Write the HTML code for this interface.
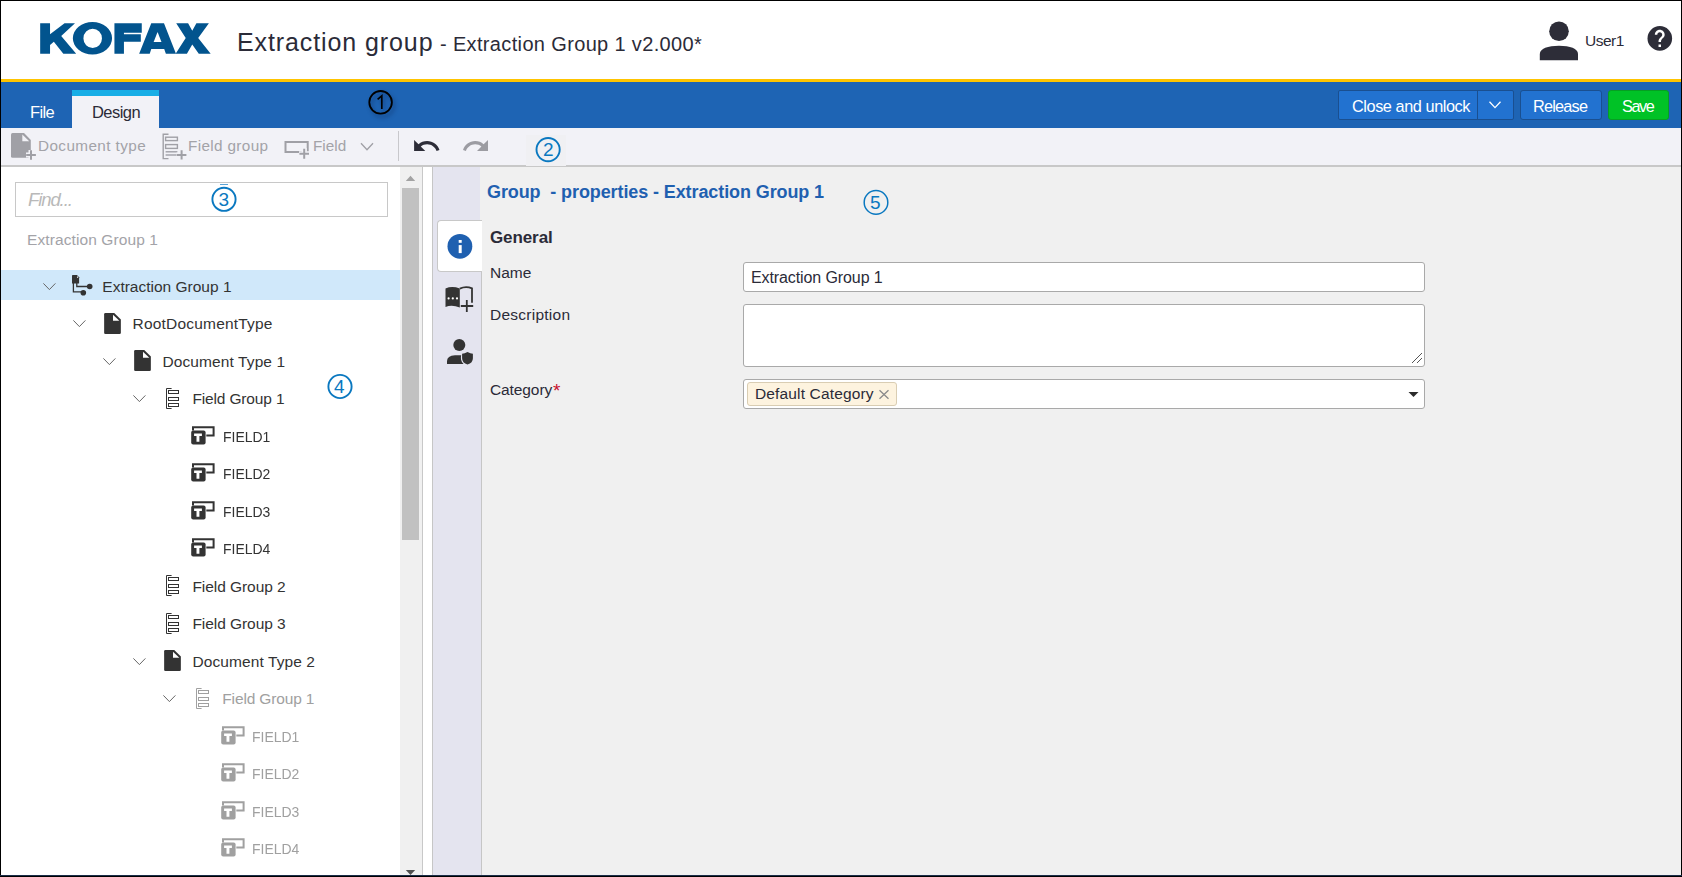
<!DOCTYPE html>
<html><head><meta charset="utf-8">
<style>
*{box-sizing:border-box}
html,body{margin:0;padding:0}
body{width:1682px;height:877px;overflow:hidden;position:relative;background:#fff;font-family:"Liberation Sans",sans-serif;color:#333}
.a{position:absolute}
.t{position:absolute;white-space:pre;line-height:1}
svg{position:absolute;overflow:visible}
</style></head><body>
<!-- header -->
<div class="a" style="left:0;top:0;width:1682px;height:79px;background:#fff"></div>
<svg style="left:30px;top:10px" width="200" height="60" viewBox="0 0 1682 505">
 <g fill="#02548e">
  <polygon points="85,112 168,112 168,205 290,112 378,112 262,218 388,368 280,368 200,268 168,295 168,368 85,368"/>
  <path fill-rule="evenodd" d="M360,238 A165,137 0 1,0 690,238 A165,137 0 1,0 360,238 Z M449,239 A78,81 0 1,0 605,239 A78,81 0 1,0 449,239 Z"/>
  <polygon points="710,112 940,112 940,192 790,192 790,205 932,205 932,268 790,268 790,368 710,368"/>
  <polygon points="1020,112 1127,112 1228,368 1143,368 1129,328 1020,328 1007,368 918,368"/>
  <polygon points="1230,112 1330,112 1365,175 1400,112 1505,112 1415,235 1520,368 1420,368 1365,290 1320,368 1225,368 1310,235"/>
 </g>
</svg>
<svg style="left:30px;top:10px" width="200" height="60" viewBox="0 0 1682 505"><polygon points="1073,185 1040,270 1106,270" fill="#fff"/></svg>
<div class="t" style="left:237px;top:30px;font-size:25px;color:#2b2b38;letter-spacing:0.9px">Extraction group</div>
<div class="t" style="left:440px;top:34px;font-size:20px;color:#2b2b38;letter-spacing:0.35px">- Extraction Group 1 v2.000*</div>
<!-- user -->
<svg style="left:1539px;top:21px" width="40" height="40" viewBox="0 0 40 40">
 <circle cx="20" cy="10.3" r="9.8" fill="#2d2d38"/>
 <path d="M0.8,39.2 V33 C0.8,27.5 9,24.7 20,24.7 C31,24.7 39,27.5 39,33 V39.2 Z" fill="#2d2d38"/>
</svg>
<div class="t" style="left:1585px;top:33px;font-size:15.5px;color:#2b2b38;letter-spacing:-0.5px">User1</div>
<svg style="left:0;top:0" width="1682" height="80" viewBox="0 0 1682 80">
 <circle cx="1659.8" cy="38.4" r="12.3" fill="#2d2d38"/>
 <g transform="translate(1645.0,23.6) scale(1.23)"><path fill="#fff" d="M13,19h-2v-2h2v2zm2.07-7.75l-.9.92C13.45,12.9 13,13.5 13,15h-2v-.5c0-1.1.45-2.1 1.17-2.83l1.24-1.26c.37-.36.59-.86.59-1.41 0-1.1-.9-2-2-2s-2 .9-2 2H8c0-2.21 1.79-4 4-4s4 1.79 4 4c0 .88-.36 1.68-.93 2.25z"/></g>
</svg>
<!-- yellow + blue bar -->
<div class="a" style="left:0;top:79px;width:1682px;height:3px;background:#ffc400"></div>
<div class="a" style="left:0;top:82px;width:1682px;height:46px;background:#1e64b4"></div>
<div class="t" style="left:30px;top:104px;font-size:16.5px;color:#fff;letter-spacing:-0.6px">File</div>
<div class="a" style="left:72px;top:90px;width:87px;height:38px;background:#f2f2f7;border-top:6px solid #18aee6"></div>
<div class="t" style="left:92px;top:104px;font-size:16.5px;color:#2b2b38;letter-spacing:-0.55px">Design</div>
<!-- annotation 1 -->
<svg style="left:364px;top:86px;filter:drop-shadow(2px 3px 2px rgba(0,0,30,.35))" width="34" height="34" viewBox="0 0 34 34">
 <circle cx="16.6" cy="16.3" r="11.3" fill="none" stroke="#000" stroke-width="1.8"/>
 <path d="M13.6,13.4 L17.8,9.8 V22.9" fill="none" stroke="#000" stroke-width="1.7"/>
</svg>
<!-- buttons -->
<div class="a" style="left:1338px;top:90px;width:176px;height:30px;background:#2272d0;border:1px solid #1a4f90;border-radius:2px"></div>
<div class="a" style="left:1477px;top:91px;width:1px;height:28px;background:#1a4f90"></div>
<div class="t" style="left:1352px;top:98px;font-size:16.3px;color:#fff;letter-spacing:-0.43px">Close and unlock</div>
<svg style="left:1488px;top:100px" width="14" height="10" viewBox="0 0 14 10">
 <path d="M1.5,1.8 L7,7.6 L12.5,1.8" fill="none" stroke="#fff" stroke-width="1.3"/>
</svg>
<div class="a" style="left:1520px;top:90px;width:82px;height:30px;background:#2272d0;border:1px solid #1a4f90;border-radius:3px"></div>
<div class="t" style="left:1533px;top:98px;font-size:16.3px;color:#fff;letter-spacing:-0.8px">Release</div>
<div class="a" style="left:1608px;top:90px;width:61px;height:30px;background:#00c226;border:1px solid #05a022;border-radius:3px"></div>
<div class="t" style="left:1622px;top:98px;font-size:16.3px;color:#fff;letter-spacing:-1.4px">Save</div>
<!-- toolbar -->
<div class="a" style="left:0;top:128px;width:1682px;height:37px;background:#f2f2f7"></div>
<div class="a" style="left:0;top:165px;width:1682px;height:2px;background:#c8c8c8"></div>
<svg style="left:11px;top:133px" width="26" height="28" viewBox="0 0 26 28">
 <path d="M1.5,0 H13 L19.8,7 V23.3 Q19.8,24.8 18.3,24.8 H1.5 Q0,24.8 0,23.3 V1.5 Q0,0 1.5,0 Z" fill="#a0a0a6"/>
 <path d="M11.3,1.6 V8.2 H18.2 Z" fill="#f2f2f7"/>
 <path d="M20,17 V27 M15,22 H25" stroke="#f2f2f7" stroke-width="5"/>
 <path d="M20,17.3 V26.8 M15.2,22 H24.9" stroke="#a0a0a6" stroke-width="2"/>
</svg>
<div class="t" style="left:38px;top:138px;font-size:15.3px;color:#a3a3a8;letter-spacing:0.4px">Document type</div>
<svg style="left:162px;top:133px" width="26" height="28" viewBox="0 0 26 28">
 <path d="M6.5,1.2 H1.2 V25.6 H6.5" fill="none" stroke="#a0a0a6" stroke-width="1.4"/>
 <rect x="3.6" y="4.2" width="11.8" height="3.4" fill="none" stroke="#a0a0a6" stroke-width="1.4"/>
 <rect x="3.6" y="11.6" width="11.8" height="3.8" fill="none" stroke="#a0a0a6" stroke-width="1.4"/>
 <path d="M3.6,18.8 H15.4" stroke="#a0a0a6" stroke-width="1.4"/>
 <path d="M3.6,22 H15.4" stroke="#a0a0a6" stroke-width="1.4"/>
 <path d="M19.6,16.5 V27 M14.5,22 H25" stroke="#f2f2f7" stroke-width="5"/>
 <path d="M19.6,17.3 V26.5 M14.8,21.9 H24.4" stroke="#a0a0a6" stroke-width="2"/>
</svg>
<div class="t" style="left:188px;top:138px;font-size:15.3px;color:#a3a3a8;letter-spacing:0.35px">Field group</div>
<svg style="left:284px;top:140px" width="26" height="20" viewBox="0 0 26 20">
 <rect x="1.5" y="2" width="22.2" height="10" fill="none" stroke="#a0a0a6" stroke-width="2"/>
 <path d="M20.2,8 V19 M15,13.8 H25.5" stroke="#f2f2f7" stroke-width="5"/>
 <path d="M20.2,8.8 V18.8 M15.4,13.8 H25" stroke="#a0a0a6" stroke-width="2"/>
</svg>
<div class="t" style="left:313px;top:138px;font-size:15.3px;color:#a3a3a8">Field</div>
<svg style="left:359px;top:141px" width="16" height="12" viewBox="0 0 16 12">
 <path d="M2,2.2 L8,8.8 L14,2.2" fill="none" stroke="#a0a0a6" stroke-width="1.3"/>
</svg>
<div class="a" style="left:398px;top:131px;width:1px;height:30px;background:#c8c8cc"></div>
<svg style="left:0;top:0" width="1" height="1">
</svg>
<svg style="left:411px;top:132px" width="32" height="24" viewBox="0 0 32 24">
 <g transform="translate(3.1,7.9) scale(1.24,1.22)"><path d="M10.5,1 c-2.65,0 -5.05,.99 -6.9,2.6 L0,0 v9 h9 l-3.62,-3.62 c1.39,-1.16 3.16,-1.88 5.12,-1.88 c3.54,0 6.55,2.31 7.6,5.5 l2.37,-.78 C19.08,4.03 15.15,1 10.5,1 z" fill="#2d2d38"/></g>
</svg>
<svg style="left:460px;top:132px" width="32" height="24" viewBox="0 0 32 24">
 <g transform="translate(28,7.9) scale(-1.22,1.22)"><path d="M10.5,1 c-2.65,0 -5.05,.99 -6.9,2.6 L0,0 v9 h9 l-3.62,-3.62 c1.39,-1.16 3.16,-1.88 5.12,-1.88 c3.54,0 6.55,2.31 7.6,5.5 l2.37,-.78 C19.08,4.03 15.15,1 10.5,1 z" fill="#9c9ca2"/></g>
</svg>
<!-- annotation 2 -->
<div class="a" style="left:526px;top:135px;width:40px;height:31px;background:#f0f0f3"></div>
<svg style="left:530px;top:132px" width="36" height="36" viewBox="0 0 36 36">
 <circle cx="18.1" cy="17.6" r="11.6" fill="none" stroke="#0a78c0" stroke-width="1.9"/>
</svg>
<div class="t" style="left:543px;top:139.5px;font-size:19px;color:#0a78c0">2</div>

<!-- left panel -->
<div class="a" style="left:15px;top:182px;width:373px;height:35px;border:1px solid #c8c8c8;background:#fff"></div>
<div class="t" style="left:28px;top:191px;font-size:18.5px;font-style:italic;color:#b9b9b9;letter-spacing:-1.1px">Find...</div>
<svg style="left:206px;top:181px" width="36" height="36" viewBox="0 0 36 36">
 <circle cx="18" cy="18.3" r="11.6" fill="none" stroke="#0a78c0" stroke-width="1.9"/>
</svg>
<div class="t" style="left:218.5px;top:190.3px;font-size:19px;color:#0a78c0">3</div>
<div class="a" style="left:220px;top:184px;width:8px;height:1px;background:#5aa3d6"></div>
<div class="t" style="left:27px;top:232px;font-size:15.5px;color:#a3a3a8;letter-spacing:0.1px">Extraction Group 1</div>

<div class="a" style="left:1px;top:270px;width:399px;height:30px;background:#d0e8fa"></div>
<svg style="left:43px;top:283px" width="14" height="9" viewBox="0 0 14 9"><path d="M0.4,0.4 L6.4,6.6 L12.4,0.4" fill="none" stroke="#666" stroke-width="1"/></svg>
<svg style="left:72px;top:275px" width="21" height="21" viewBox="0 0 21 21"><path d="M0.6,0 H5 L7.1,2.2 V8.5 H0 V0.6 Z" fill="#333"/><path d="M1.4,8 V16.9 H11 M4.8,8 V11.5 H17" fill="none" stroke="#333" stroke-width="1.3"/><circle cx="11.3" cy="17.7" r="2.8" fill="#333"/><circle cx="17.7" cy="11.5" r="2.8" fill="#333"/><path d="M5,1 L6.6,2.7 H5 Z" fill="#fff"/></svg>
<div class="t" style="left:102.3px;top:278.8px;font-size:15.5px;color:#333;letter-spacing:0.0px">Extraction Group 1</div>
<svg style="left:73px;top:320px" width="14" height="9" viewBox="0 0 14 9"><path d="M0.4,0.4 L6.4,6.6 L12.4,0.4" fill="none" stroke="#666" stroke-width="1"/></svg>
<svg style="left:104.2px;top:313px" width="17" height="21" viewBox="0 0 16.4 20.6"><path d="M1.2,0 H9.9 L16.4,6.3 V19.4 Q16.4,20.6 15.2,20.6 H1.2 Q0,20.6 0,19.4 V1.2 Q0,0 1.2,0 Z" fill="#333"/><path d="M8.7,1.7 V7.7 H14.9 Z" fill="#fff"/></svg>
<div class="t" style="left:132.5px;top:316.3px;font-size:15.5px;color:#333;letter-spacing:0.2px">RootDocumentType</div>
<svg style="left:103px;top:358px" width="14" height="9" viewBox="0 0 14 9"><path d="M0.4,0.4 L6.4,6.6 L12.4,0.4" fill="none" stroke="#666" stroke-width="1"/></svg>
<svg style="left:134.2px;top:350px" width="17" height="21" viewBox="0 0 16.4 20.6"><path d="M1.2,0 H9.9 L16.4,6.3 V19.4 Q16.4,20.6 15.2,20.6 H1.2 Q0,20.6 0,19.4 V1.2 Q0,0 1.2,0 Z" fill="#333"/><path d="M8.7,1.7 V7.7 H14.9 Z" fill="#fff"/></svg>
<div class="t" style="left:162.5px;top:353.8px;font-size:15.5px;color:#333;letter-spacing:0.1px">Document Type 1</div>
<svg style="left:133px;top:395px" width="14" height="9" viewBox="0 0 14 9"><path d="M0.4,0.4 L6.4,6.6 L12.4,0.4" fill="none" stroke="#666" stroke-width="1"/></svg>
<svg style="left:166px;top:388px" width="14" height="22" viewBox="0 0 14 22"><path d="M5.6,0.5 H0.5 V20.5 H5.6" fill="none" stroke="#333" stroke-width="1"/><rect x="2.5" y="2.5" width="10" height="3" fill="none" stroke="#333" stroke-width="1"/><rect x="2.5" y="9.5" width="10" height="3" fill="none" stroke="#333" stroke-width="1"/><rect x="2.5" y="15.5" width="10" height="3" fill="none" stroke="#333" stroke-width="1"/></svg>
<div class="t" style="left:192.4px;top:391.3px;font-size:15.5px;color:#333;letter-spacing:-0.15px">Field Group 1</div>
<svg style="left:191px;top:426px" width="24" height="19" viewBox="0 0 24 19"><path d="M2,4.6 V1.2 H22.6 V9.4 H15.3" fill="none" stroke="#333" stroke-width="2"/><rect x="0.2" y="4.6" width="14.4" height="13.9" rx="2" fill="#333"/><path d="M3.1,7.5 H10.9 V9.9 H8.4 V15.8 H5.5 V9.9 H3.1 Z" fill="#fff"/></svg>
<div class="t" style="left:222.8px;top:428.8px;font-size:15.5px;color:#333;letter-spacing:0px;transform:scaleX(0.9);transform-origin:0 0">FIELD1</div>
<svg style="left:191px;top:463px" width="24" height="19" viewBox="0 0 24 19"><path d="M2,4.6 V1.2 H22.6 V9.4 H15.3" fill="none" stroke="#333" stroke-width="2"/><rect x="0.2" y="4.6" width="14.4" height="13.9" rx="2" fill="#333"/><path d="M3.1,7.5 H10.9 V9.9 H8.4 V15.8 H5.5 V9.9 H3.1 Z" fill="#fff"/></svg>
<div class="t" style="left:222.8px;top:466.3px;font-size:15.5px;color:#333;letter-spacing:0px;transform:scaleX(0.9);transform-origin:0 0">FIELD2</div>
<svg style="left:191px;top:501px" width="24" height="19" viewBox="0 0 24 19"><path d="M2,4.6 V1.2 H22.6 V9.4 H15.3" fill="none" stroke="#333" stroke-width="2"/><rect x="0.2" y="4.6" width="14.4" height="13.9" rx="2" fill="#333"/><path d="M3.1,7.5 H10.9 V9.9 H8.4 V15.8 H5.5 V9.9 H3.1 Z" fill="#fff"/></svg>
<div class="t" style="left:222.8px;top:503.8px;font-size:15.5px;color:#333;letter-spacing:0px;transform:scaleX(0.9);transform-origin:0 0">FIELD3</div>
<svg style="left:191px;top:538px" width="24" height="19" viewBox="0 0 24 19"><path d="M2,4.6 V1.2 H22.6 V9.4 H15.3" fill="none" stroke="#333" stroke-width="2"/><rect x="0.2" y="4.6" width="14.4" height="13.9" rx="2" fill="#333"/><path d="M3.1,7.5 H10.9 V9.9 H8.4 V15.8 H5.5 V9.9 H3.1 Z" fill="#fff"/></svg>
<div class="t" style="left:222.8px;top:541.3px;font-size:15.5px;color:#333;letter-spacing:0px;transform:scaleX(0.9);transform-origin:0 0">FIELD4</div>
<svg style="left:166px;top:575px" width="14" height="22" viewBox="0 0 14 22"><path d="M5.6,0.5 H0.5 V20.5 H5.6" fill="none" stroke="#333" stroke-width="1"/><rect x="2.5" y="2.5" width="10" height="3" fill="none" stroke="#333" stroke-width="1"/><rect x="2.5" y="9.5" width="10" height="3" fill="none" stroke="#333" stroke-width="1"/><rect x="2.5" y="15.5" width="10" height="3" fill="none" stroke="#333" stroke-width="1"/></svg>
<div class="t" style="left:192.4px;top:578.8px;font-size:15.5px;color:#333;letter-spacing:-0.05px">Field Group 2</div>
<svg style="left:166px;top:613px" width="14" height="22" viewBox="0 0 14 22"><path d="M5.6,0.5 H0.5 V20.5 H5.6" fill="none" stroke="#333" stroke-width="1"/><rect x="2.5" y="2.5" width="10" height="3" fill="none" stroke="#333" stroke-width="1"/><rect x="2.5" y="9.5" width="10" height="3" fill="none" stroke="#333" stroke-width="1"/><rect x="2.5" y="15.5" width="10" height="3" fill="none" stroke="#333" stroke-width="1"/></svg>
<div class="t" style="left:192.4px;top:616.3px;font-size:15.5px;color:#333;letter-spacing:-0.05px">Field Group 3</div>
<svg style="left:133px;top:658px" width="14" height="9" viewBox="0 0 14 9"><path d="M0.4,0.4 L6.4,6.6 L12.4,0.4" fill="none" stroke="#666" stroke-width="1"/></svg>
<svg style="left:164.2px;top:650px" width="17" height="21" viewBox="0 0 16.4 20.6"><path d="M1.2,0 H9.9 L16.4,6.3 V19.4 Q16.4,20.6 15.2,20.6 H1.2 Q0,20.6 0,19.4 V1.2 Q0,0 1.2,0 Z" fill="#333"/><path d="M8.7,1.7 V7.7 H14.9 Z" fill="#fff"/></svg>
<div class="t" style="left:192.4px;top:653.8px;font-size:15.5px;color:#333;letter-spacing:0.1px">Document Type 2</div>
<svg style="left:163px;top:695px" width="14" height="9" viewBox="0 0 14 9"><path d="M0.4,0.4 L6.4,6.6 L12.4,0.4" fill="none" stroke="#666" stroke-width="1"/></svg>
<svg style="left:196px;top:688px" width="14" height="22" viewBox="0 0 14 22"><path d="M5.6,0.5 H0.5 V20.5 H5.6" fill="none" stroke="#a0a0a0" stroke-width="1"/><rect x="2.5" y="2.5" width="10" height="3" fill="none" stroke="#a0a0a0" stroke-width="1"/><rect x="2.5" y="9.5" width="10" height="3" fill="none" stroke="#a0a0a0" stroke-width="1"/><rect x="2.5" y="15.5" width="10" height="3" fill="none" stroke="#a0a0a0" stroke-width="1"/></svg>
<div class="t" style="left:222.3px;top:691.3px;font-size:15.5px;color:#a0a0a0;letter-spacing:-0.15px">Field Group 1</div>
<svg style="left:221px;top:726px" width="24" height="19" viewBox="0 0 24 19"><path d="M2,4.6 V1.2 H22.6 V9.4 H15.3" fill="none" stroke="#a0a0a0" stroke-width="2"/><rect x="0.2" y="4.6" width="14.4" height="13.9" rx="2" fill="#a0a0a0"/><path d="M3.1,7.5 H10.9 V9.9 H8.4 V15.8 H5.5 V9.9 H3.1 Z" fill="#fff"/></svg>
<div class="t" style="left:252.3px;top:728.8px;font-size:15.5px;color:#a0a0a0;letter-spacing:0px;transform:scaleX(0.9);transform-origin:0 0">FIELD1</div>
<svg style="left:221px;top:763px" width="24" height="19" viewBox="0 0 24 19"><path d="M2,4.6 V1.2 H22.6 V9.4 H15.3" fill="none" stroke="#a0a0a0" stroke-width="2"/><rect x="0.2" y="4.6" width="14.4" height="13.9" rx="2" fill="#a0a0a0"/><path d="M3.1,7.5 H10.9 V9.9 H8.4 V15.8 H5.5 V9.9 H3.1 Z" fill="#fff"/></svg>
<div class="t" style="left:252.3px;top:766.3px;font-size:15.5px;color:#a0a0a0;letter-spacing:0px;transform:scaleX(0.9);transform-origin:0 0">FIELD2</div>
<svg style="left:221px;top:801px" width="24" height="19" viewBox="0 0 24 19"><path d="M2,4.6 V1.2 H22.6 V9.4 H15.3" fill="none" stroke="#a0a0a0" stroke-width="2"/><rect x="0.2" y="4.6" width="14.4" height="13.9" rx="2" fill="#a0a0a0"/><path d="M3.1,7.5 H10.9 V9.9 H8.4 V15.8 H5.5 V9.9 H3.1 Z" fill="#fff"/></svg>
<div class="t" style="left:252.3px;top:803.8px;font-size:15.5px;color:#a0a0a0;letter-spacing:0px;transform:scaleX(0.9);transform-origin:0 0">FIELD3</div>
<svg style="left:221px;top:838px" width="24" height="19" viewBox="0 0 24 19"><path d="M2,4.6 V1.2 H22.6 V9.4 H15.3" fill="none" stroke="#a0a0a0" stroke-width="2"/><rect x="0.2" y="4.6" width="14.4" height="13.9" rx="2" fill="#a0a0a0"/><path d="M3.1,7.5 H10.9 V9.9 H8.4 V15.8 H5.5 V9.9 H3.1 Z" fill="#fff"/></svg>
<div class="t" style="left:252.3px;top:841.3px;font-size:15.5px;color:#a0a0a0;letter-spacing:0px;transform:scaleX(0.9);transform-origin:0 0">FIELD4</div>
<svg style="left:322px;top:368px" width="36" height="36" viewBox="0 0 36 36"><circle cx="18" cy="18.5" r="11.6" fill="none" stroke="#0a78c0" stroke-width="1.9"/></svg>
<div class="t" style="left:334px;top:377.1px;font-size:19px;color:#0a78c0">4</div>


<!-- scrollbar -->
<div class="a" style="left:400px;top:167px;width:22px;height:708px;background:#f0f0f0"></div>
<svg style="left:405px;top:175px" width="11" height="7" viewBox="0 0 11 7"><path d="M0.8,6 L5.5,0.8 L10.2,6 Z" fill="#a3a3a3"/></svg>
<div class="a" style="left:402px;top:188px;width:17px;height:352px;background:#c1c1c1"></div>
<svg style="left:405px;top:869px" width="11" height="7" viewBox="0 0 11 7"><path d="M0.8,1 L5.5,6 L10.2,1 Z" fill="#505050"/></svg>
<div class="a" style="left:422px;top:167px;width:1px;height:708px;background:#c8c8c8"></div>
<div class="a" style="left:423px;top:167px;width:9px;height:708px;background:#fff"></div>
<div class="a" style="left:432px;top:167px;width:1px;height:708px;background:#c6c6c6"></div>
<div class="a" style="left:480px;top:167px;width:1201px;height:708px;background:#f0f0f0"></div>
<div class="a" style="left:433px;top:167px;width:47px;height:708px;background:#e4e4ef"></div>
<div class="a" style="left:433px;top:271px;width:48px;height:604px;background:#e4e4ef"></div>
<div class="a" style="left:481px;top:271px;width:1px;height:604px;background:#c6c6c6"></div>
<!-- side tabs -->
<div class="a" style="left:437px;top:220px;width:45px;height:52px;background:#fff;border:1px solid #c8c8c8;border-right:none;border-radius:4px 0 0 4px"></div>
<svg style="left:447px;top:233px" width="26" height="26" viewBox="0 0 26 26">
 <circle cx="12.9" cy="13.3" r="12.4" fill="#1f60b0"/>
 <rect x="11.7" y="7" width="3" height="2.8" fill="#fff"/>
 <rect x="11.7" y="12.1" width="3" height="8" fill="#fff"/>
</svg>
<svg style="left:0;top:0" width="500" height="380" viewBox="0 0 500 380">
 <path d="M445.5,288.4 Q452,285.6 459.8,288.4 V307.4 Q452,304.6 445.5,306.9 Z" fill="#333"/>
 <path d="M459.8,288.6 Q466,285.8 472,288.4 V302.8" fill="none" stroke="#333" stroke-width="1.8"/>
 <circle cx="448.6" cy="298.4" r="1.1" fill="#fff"/><circle cx="452.8" cy="298.4" r="1.1" fill="#fff"/><circle cx="457" cy="298.4" r="1.1" fill="#fff"/>
 <path d="M460.8,306 H473.2 M466.8,300 V312" fill="none" stroke="#333" stroke-width="1.8"/>
 <circle cx="459.3" cy="344.9" r="6" fill="#333"/>
 <path d="M447,363.9 V361.2 Q447,355.6 455,355.2 H461.2 Q460.6,357.2 461,359.6 Q461.6,362.5 463.6,363.9 Z" fill="#333"/>
 <path d="M467.5,351.9 Q470.5,353.4 472.9,353.8 V358.2 Q472.9,362.8 467.5,364.6 Q462.1,362.8 462.1,358.2 V353.8 Q464.5,353.4 467.5,351.9 Z" fill="#333"/>
</svg>
<!-- form -->
<div class="t" style="left:487px;top:183px;font-size:18px;font-weight:bold;color:#1f60b0;letter-spacing:-0.1px">Group&nbsp; - properties - Extraction Group 1</div>
<svg style="left:858px;top:185px" width="36" height="36" viewBox="0 0 36 36">
 <circle cx="18" cy="17.4" r="11.8" fill="none" stroke="#0a78c0" stroke-width="1.5"/>
</svg>
<div class="t" style="left:870px;top:193px;font-size:19px;color:#0a78c0">5</div>
<div class="t" style="left:490px;top:229px;font-size:17px;font-weight:bold;color:#2b2b38;letter-spacing:-0.1px">General</div>
<div class="t" style="left:490px;top:265px;font-size:15.5px;color:#2b2b38;letter-spacing:0px">Name</div>
<div class="t" style="left:490px;top:307px;font-size:15.5px;color:#2b2b38;letter-spacing:0.25px">Description</div>
<div class="t" style="left:490px;top:382px;font-size:15.5px;color:#2b2b38;letter-spacing:-0.1px">Category</div>
<div class="t" style="left:553px;top:381px;font-size:19px;color:#c8102e">*</div>
<div class="a" style="left:743px;top:262px;width:682px;height:30px;background:#fff;border:1px solid #a9a9a9;border-radius:3px"></div>
<div class="t" style="left:751px;top:270px;font-size:16px;color:#2b2b38;letter-spacing:-0.1px">Extraction Group 1</div>
<div class="a" style="left:743px;top:304px;width:682px;height:63px;background:#fff;border:1px solid #a9a9a9;border-radius:3px"></div>
<svg style="left:1410px;top:351px" width="14" height="14" viewBox="0 0 14 14"><path d="M2,12 L12,2 M7,12 L12,7" stroke="#555" stroke-width="1"/></svg>
<div class="a" style="left:743px;top:379px;width:682px;height:30px;background:#fff;border:1px solid #a9a9a9;border-radius:3px"></div>
<div class="a" style="left:747px;top:382px;width:150px;height:24px;background:#fdf3df;border:1px solid #d9cdb3;border-radius:3px"></div>
<div class="t" style="left:755px;top:386px;font-size:15.5px;color:#2b2b38;letter-spacing:0.15px">Default Category</div>
<svg style="left:878px;top:389px" width="12" height="11" viewBox="0 0 12 11"><path d="M1.5,1.2 L10.5,9.8 M10.5,1.2 L1.5,9.8" stroke="#8a8a8a" stroke-width="1.3"/></svg>
<svg style="left:1408px;top:391px" width="12" height="7" viewBox="0 0 12 7"><path d="M0.5,1 H10.5 L5.5,6 Z" fill="#2b2b2b"/></svg>

<!-- frame -->
<div class="a" style="left:0;top:0;width:1682px;height:1px;background:#000"></div>
<div class="a" style="left:0;top:0;width:1px;height:877px;background:#000"></div>
<div class="a" style="left:1681px;top:0;width:1px;height:877px;background:#000"></div>
<div class="a" style="left:0;top:875px;width:1682px;height:1px;background:#1b2d48"></div>
<div class="a" style="left:0;top:876px;width:1682px;height:1px;background:#000"></div>
</body></html>
